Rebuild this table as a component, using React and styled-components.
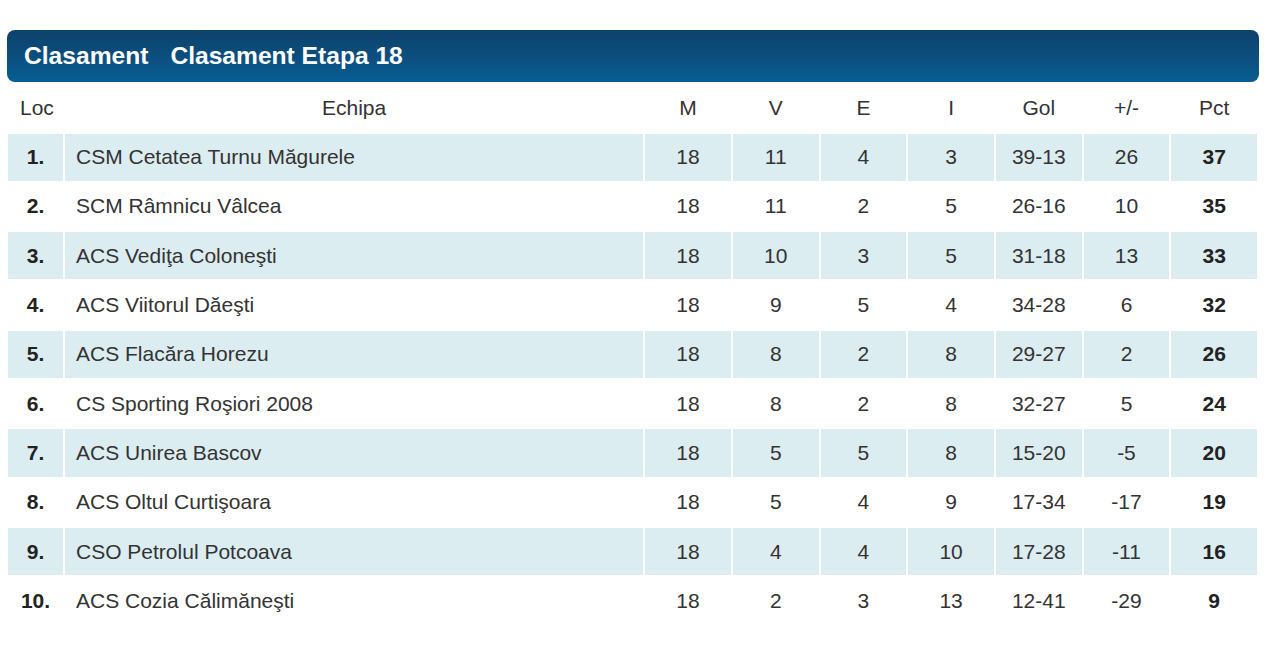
import React from "react";
import styled, { createGlobalStyle } from "styled-components";

const teams = [
  { loc: 1, name: "CSM Cetatea Turnu Măgurele", m: 18, v: 11, e: 4, i: 3, gol: "39-13", diff: 26, pct: 37 },
  { loc: 2, name: "SCM Râmnicu Vâlcea", m: 18, v: 11, e: 2, i: 5, gol: "26-16", diff: 10, pct: 35 },
  { loc: 3, name: "ACS Vediţa Coloneşti", m: 18, v: 10, e: 3, i: 5, gol: "31-18", diff: 13, pct: 33 },
  { loc: 4, name: "ACS Viitorul Dăeşti", m: 18, v: 9, e: 5, i: 4, gol: "34-28", diff: 6, pct: 32 },
  { loc: 5, name: "ACS Flacăra Horezu", m: 18, v: 8, e: 2, i: 8, gol: "29-27", diff: 2, pct: 26 },
  { loc: 6, name: "CS Sporting Roşiori 2008", m: 18, v: 8, e: 2, i: 8, gol: "32-27", diff: 5, pct: 24 },
  { loc: 7, name: "ACS Unirea Bascov", m: 18, v: 5, e: 5, i: 8, gol: "15-20", diff: -5, pct: 20 },
  { loc: 8, name: "ACS Oltul Curtişoara", m: 18, v: 5, e: 4, i: 9, gol: "17-34", diff: -17, pct: 19 },
  { loc: 9, name: "CSO Petrolul Potcoava", m: 18, v: 4, e: 4, i: 10, gol: "17-28", diff: -11, pct: 16 },
  { loc: 10, name: "ACS Cozia Călimăneşti", m: 18, v: 2, e: 3, i: 13, gol: "12-41", diff: -29, pct: 9 },
];

const columns = ["M", "V", "E", "I", "Gol", "+/-", "Pct"];

const App = () => {
  return (
    <>
      <GlobalStyle />
      <Wrapper>
        {/* bara de titlu */}
        <TitleBar>
          <TitleText>Clasament</TitleText>
          <TitleText>Clasament Etapa 18</TitleText>
        </TitleBar>
        <Table>
          <colgroup>
            <LocCol />
            <col />
            {columns.map((c) => (
              <StatCol key={c} />
            ))}
          </colgroup>
          <thead>
            <tr>
              <HeadCell>Loc</HeadCell>
              <HeadCell>Echipa</HeadCell>
              {columns.map((c) => (
                <HeadCell key={c}>{c}</HeadCell>
              ))}
            </tr>
          </thead>
          <tbody>
            {teams.map((t, idx) => (
              <Row key={t.loc} $striped={idx % 2 === 0}>
                <Cell $bold>{t.loc}.</Cell>
                <TeamCell>{t.name}</TeamCell>
                <Cell>{t.m}</Cell>
                <Cell>{t.v}</Cell>
                <Cell>{t.e}</Cell>
                <Cell>{t.i}</Cell>
                <Cell>{t.gol}</Cell>
                <Cell>{t.diff}</Cell>
                <Cell $bold>{t.pct}</Cell>
              </Row>
            ))}
          </tbody>
        </Table>
      </Wrapper>
    </>
  );
};

export default App;

const GlobalStyle = createGlobalStyle`
  body {
    margin: 0;
    background: #ffffff;
    font-family: "Liberation Sans", Arial, sans-serif;
    color: #333333;
  }
`;

const Wrapper = styled.div`
  padding: 30px 0 0 7px;
  width: 1252px;
`;

const TitleBar = styled.div`
  height: 52px;
  border-radius: 8px;
  background: linear-gradient(to bottom, #0d426b 0%, #0b4f7f 55%, #095e93 100%);
  display: flex;
  align-items: center;
  gap: 22px;
  padding-left: 17px;
  box-sizing: border-box;
`;

const TitleText = styled.span`
  color: #ffffff;
  font-weight: bold;
  font-size: 24.6px;
`;

const Table = styled.table`
  width: 1253px;
  margin-left: -1px;
  border-collapse: separate;
  border-spacing: 2px;
  table-layout: fixed;
  font-size: 21px;
`;

const LocCol = styled.col`
  width: 55px;
`;

const StatCol = styled.col`
  width: 85.7px;
`;

const HeadCell = styled.th`
  height: 47.5px;
  font-weight: normal;
  text-align: center;
  padding: 0;
  color: #333333;
  &:first-child {
    text-align: left;
    padding-left: 12px;
  }
`;

const Row = styled.tr`
  background: ${(p) => (p.$striped ? "#dcedf1" : "#ffffff")};
`;

const Cell = styled.td`
  height: 47.33px;
  padding: 0;
  text-align: center;
  font-weight: ${(p) => (p.$bold ? "bold" : "normal")};
  color: ${(p) => (p.$bold ? "#222222" : "#333333")};
`;

const TeamCell = styled.td`
  padding: 0 0 0 11px;
  text-align: left;
  color: #333333;
`;
